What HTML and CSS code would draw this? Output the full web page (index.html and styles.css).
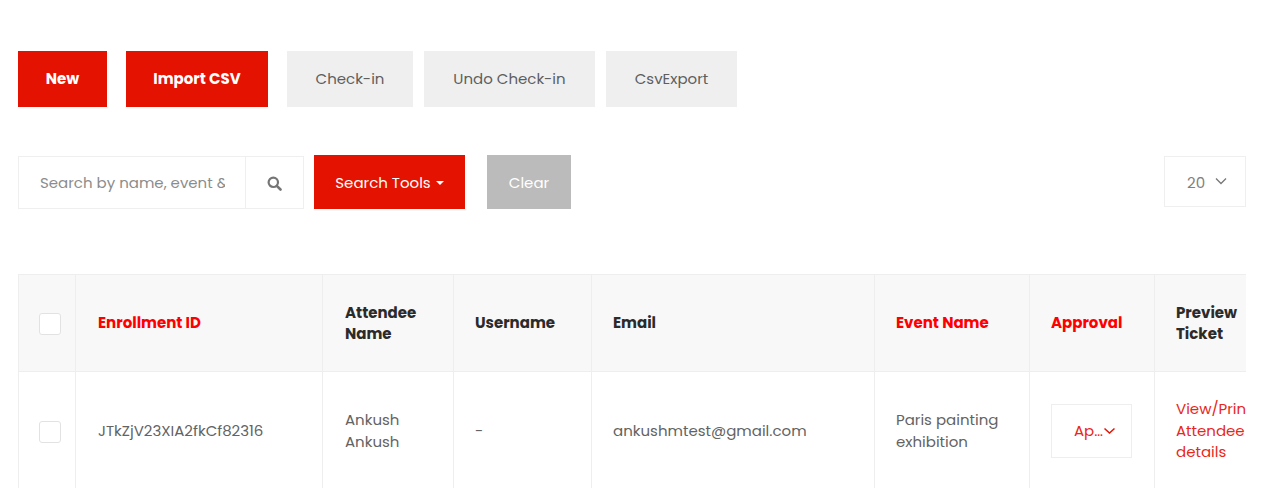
FILE: index.html
```html
<!DOCTYPE html>
<html lang="en">
<head>
<meta charset="utf-8">
<title>Attendees</title>
<link rel="stylesheet" href="styles.css">
</head>
<body>
<div class="page">
  <div class="actions">
    <button class="btn btn-red bold w-new">New</button>
    <button class="btn btn-red bold w-import">Import CSV</button>
    <button class="btn btn-grey w-check">Check-in</button>
    <button class="btn btn-grey w-undo">Undo Check-in</button>
    <button class="btn btn-grey w-csv">CsvExport</button>
  </div>
  <div class="toolbar">
    <div class="search-input"><input type="text" placeholder="Search by name, event &amp; more"></div>
    <div class="search-icon">
      <svg width="15" height="15" viewBox="0 0 15 15"><circle cx="6.3" cy="6.3" r="4.7" fill="none" stroke="#757575" stroke-width="2.2"/><path d="M9.8 9.8l3.7 3.7" stroke="#757575" stroke-width="2.6" stroke-linecap="round"/></svg>
    </div>
    <button class="btn btn-red tools">Search Tools<span class="caret"></span></button>
    <button class="btn clear">Clear</button>
    <div class="spacer"></div>
    <div class="per-page">20
      <svg class="per-chevron" width="12" height="8" viewBox="0 0 12 8"><path d="M1 1.5l5 5 5-5" fill="none" stroke="#777" stroke-width="1.3"/></svg>
    </div>
  </div>
  <div class="table-wrap">
    <table>
      <colgroup>
        <col class="c1"><col class="c2"><col class="c3"><col class="c4"><col class="c5"><col class="c6"><col class="c7"><col class="c8">
      </colgroup>
      <thead>
        <tr>
          <th><span class="check"></span></th>
          <th class="red">Enrollment ID</th>
          <th>Attendee Name</th>
          <th>Username</th>
          <th>Email</th>
          <th class="red">Event Name</th>
          <th class="red">Approval</th>
          <th>Preview Ticket</th>
        </tr>
      </thead>
      <tbody>
        <tr>
          <td><span class="check"></span></td>
          <td>JTkZjV23XIA2fkCf82316</td>
          <td>Ankush Ankush</td>
          <td>-</td>
          <td>ankushmtest@gmail.com</td>
          <td>Paris painting exhibition</td>
          <td><div class="select">Ap…<svg width="13" height="8" viewBox="0 0 13 8"><path d="M1.5 1.5l5 4.6 5-4.6" fill="none" stroke="#e61300" stroke-width="1.5"/></svg></div></td>
          <td class="link">View/Print Attendee details</td>
        </tr>
      </tbody>
    </table>
  </div>
</div>
</body>
</html>
```
FILE: styles.css
```css
* { box-sizing: border-box; }
html, body { margin: 0; padding: 0; background: #fff; height: 488px; overflow: hidden; }
body { font-family: Poppins, "Open Sans", "Noto Sans", sans-serif; color: #555; }
.page { padding: 51px 34px 0 18px; }
.actions { display: flex; gap: 11px; height: 56px; }
.btn { border: 0; font: inherit; font-size: 15px; display: flex; align-items: center; justify-content: center; padding: 0; }
.actions .btn { padding-bottom: 2px; }
.bold { font-weight: 700; }
.btn-red { background: #e41200; color: #fff; }
.btn-grey { background: #efefef; color: #5e5e5e; }
.w-new { width: 89px; margin-right: 8px; }
.w-import { width: 142px; margin-right: 8px; }
.w-check { width: 126px; }
.w-undo { width: 171px; }
.w-csv { width: 131px; }
.toolbar { display: flex; margin-top: 48px; height: 54px; }
.search-input { width: 227px; margin-top: 1px; border: 1px solid #efefef; border-right: 0; padding-left: 21px; display: flex; align-items: center; }
.search-input input { width: 185px; border: 0; outline: 0; padding: 0; font: inherit; font-size: 15px; }
.search-input input::placeholder { color: #8c8c8c; }
.search-icon { width: 59px; margin-top: 1px; border: 1px solid #efefef; display: flex; align-items: center; justify-content: center; padding-top: 2px; }
.tools { width: 151px; margin-left: 10px; }
.caret { margin-left: 5px; margin-top: 2px; border-top: 4px solid #fff; border-left: 4px solid transparent; border-right: 4px solid transparent; }
.clear { width: 84px; margin-left: 22px; background: #bbb; color: #fff; }
.spacer { flex: 1; }
.per-page { width: 82px; height: 51px; margin-top: 1px; padding-top: 2px; border: 1px solid #efefef; display: flex; align-items: center; gap: 10px; padding-left: 22px; font-size: 15px; color: #808080; }
.per-chevron { margin-top: -4px; }
.table-wrap { margin-top: 65px; overflow: hidden; }
table { table-layout: fixed; width: 1250px; border-collapse: collapse; font-size: 15px; }
.c1 { width: 57px; } .c2 { width: 247px; } .c3 { width: 131px; } .c4 { width: 138px; } .c5 { width: 283px; } .c6 { width: 155px; } .c7 { width: 125px; } .c8 { width: 114px; }
th, td { border: 1px solid #eee; padding: 0 0 0 21px; text-align: left; vertical-align: middle; line-height: 21.5px; }
th { height: 97px; background: #f8f8f8; color: #2b2b2b; font-weight: 700; }
th.red { color: #f00; }
td { height: 118px; color: #636363; }
th:first-child, td:first-child { padding-left: 20px; }
th:first-child { padding-top: 2px; }
td:first-child { padding-top: 2px; }
th:nth-child(2), td:nth-child(2), th:nth-child(3), td:nth-child(3) { padding-left: 22px; }
.check { display: block; width: 22px; height: 22px; border: 1px solid #e2e2e2; border-radius: 3px; background: #fff; }
.select { width: 81px; height: 54px; border: 1px solid #eee; display: flex; align-items: center; padding-left: 22px; color: #e8281a; }
.link { color: #e8281a; }
```
